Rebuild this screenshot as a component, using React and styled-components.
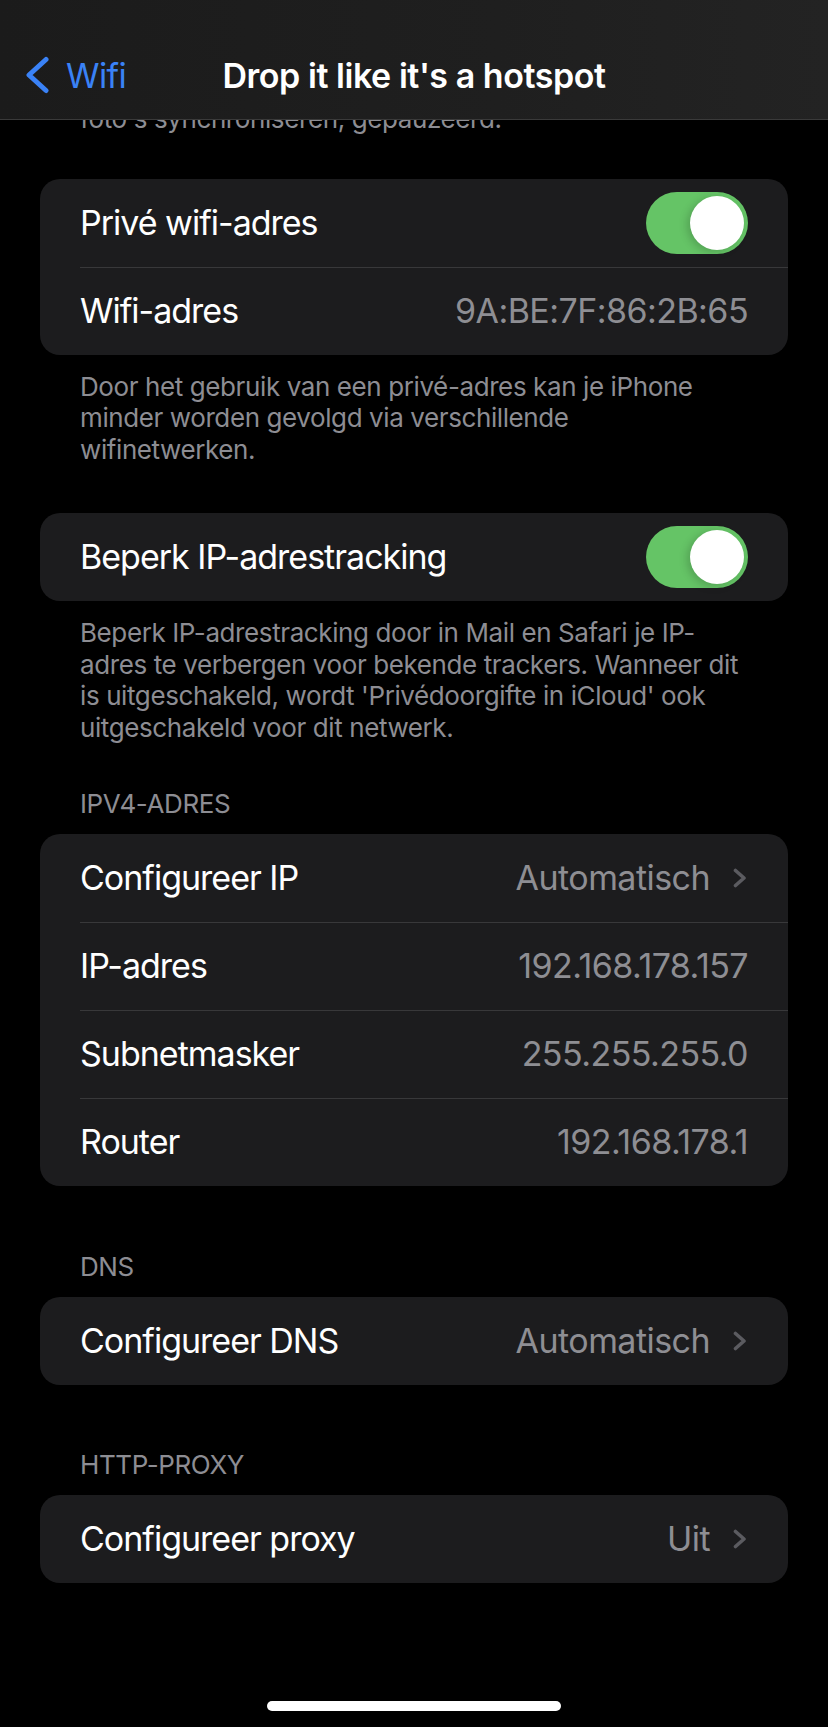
import React from 'react'
import styled, { createGlobalStyle } from 'styled-components'

const GlobalStyle = createGlobalStyle`
  html, body {
    margin: 0;
    padding: 0;
    background: #000;
  }
  body {
    font-family: Inter, "Noto Sans", "DejaVu Sans", sans-serif;
    -webkit-font-smoothing: antialiased;
  }
`

const Screen = styled.div`
  position: relative;
  width: 828px;
  min-height: 1727px;
  background: #000;
  overflow: hidden;
`

const NavBar = styled.header`
  position: absolute;
  top: 0;
  left: 0;
  right: 0;
  z-index: 2;
  height: 88px;
  padding-top: 31px;
  display: grid;
  grid-template-columns: 1fr auto 1fr;
  align-items: center;
  background: linear-gradient(90deg, #1b1b1b 0%, #1f1f1f 60%, #232323 100%);
  border-bottom: 1px solid #3a3a3a;
`

const BackButton = styled.div`
  display: flex;
  align-items: center;
  gap: 16px;
  padding-left: 24px;
  color: #3a82f6;
  font-size: 34px;
  line-height: 41px;
  letter-spacing: -0.6px;
  justify-self: start;
`

const Title = styled.h1`
  margin: 0;
  color: #fff;
  font-size: 34px;
  line-height: 41px;
  font-weight: 600;
  letter-spacing: -0.45px;
`

const Content = styled.main`
  padding: 103px 40px 140px;
`

const Group = styled.section`
  margin-top: ${p => p.$top}px;
`

const Header = styled.div`
  padding: 0 40px;
  margin-bottom: 14px;
  color: #8d8d93;
  font-size: 26px;
  line-height: 32px;
  text-transform: uppercase;
  letter-spacing: -0.4px;
`

const Card = styled.div`
  background: #1c1c1e;
  border-radius: 20px;
  overflow: hidden;
`

const Row = styled.div`
  position: relative;
  height: 88px;
  display: flex;
  align-items: center;
  justify-content: space-between;
  padding: 0 40px;

  & + &::before {
    content: '';
    position: absolute;
    top: 0;
    left: 40px;
    right: 0;
    height: 1px;
    background: #38383a;
  }
`

const Label = styled.span`
  color: #fff;
  font-size: 34px;
  line-height: 41px;
  letter-spacing: -1px;
  white-space: nowrap;
`

const Value = styled.span`
  display: flex;
  align-items: center;
  gap: 22px;
  color: #8e8e93;
  font-size: 34px;
  line-height: 41px;
  letter-spacing: -0.55px;
  white-space: nowrap;
`

const Footer = styled.p`
  margin: 0;
  padding: ${p => (p.$flush ? 0 : 16)}px 40px 0;
  color: #8d8d93;
  font-size: 26px;
  line-height: 31.7px;
  letter-spacing: -0.4px;
  white-space: pre;
`

const Switch = styled.div`
  position: relative;
  width: 102px;
  height: 62px;
  border-radius: 31px;
  background: ${p => (p.$on ? '#65c466' : '#39393d')};

  &::after {
    content: '';
    position: absolute;
    top: 4px;
    ${p => (p.$on ? 'right: 4px;' : 'left: 4px;')}
    width: 54px;
    height: 54px;
    border-radius: 50%;
    background: #fff;
    box-shadow: -3px 2px 8px rgba(0, 0, 0, 0.18);
  }
`

const HomeIndicator = styled.div`
  position: absolute;
  left: 50%;
  bottom: 16px;
  width: 294px;
  height: 10px;
  margin-left: -147px;
  border-radius: 5px;
  background: #fff;
`

function BackChevron() {
  return (
    <svg width="26" height="38" viewBox="0 0 26 38" fill="none">
      <path d="M22 3.5 L5 19 L22 34.5" stroke="#3a82f6" strokeWidth="5" strokeLinecap="round" strokeLinejoin="round" />
    </svg>
  )
}

function Disclosure() {
  return (
    <svg width="16" height="20" viewBox="0 0 16 20" fill="none">
      <path d="M3.5 2.5 L12 10 L3.5 17.5" stroke="#5b5b60" strokeWidth="3.6" strokeLinecap="round" strokeLinejoin="round" />
    </svg>
  )
}

function InfoRow({ label, value, chevron }) {
  return (
    <Row>
      <Label>{label}</Label>
      <Value>
        {value}
        {chevron && <Disclosure />}
      </Value>
    </Row>
  )
}

function ToggleRow({ label, on }) {
  return (
    <Row>
      <Label>{label}</Label>
      <Switch $on={on} />
    </Row>
  )
}

export default function App() {
  return (
    <>
      <GlobalStyle />
      <Screen>
        <NavBar>
          <BackButton>
            <BackChevron />
            <span>Wifi</span>
          </BackButton>
          <Title>Drop it like it's a hotspot</Title>
          <div />
        </NavBar>

        <Content>
          <Footer $flush>{"foto's synchroniseren, gepauzeerd."}</Footer>

          <Group $top={44}>
            <Card>
              <ToggleRow label="Privé wifi-adres" on />
              <InfoRow label="Wifi-adres" value="9A:BE:7F:86:2B:65" />
            </Card>
            <Footer>
              {"Door het gebruik van een privé-adres kan je iPhone\nminder worden gevolgd via verschillende\nwifinetwerken."}
            </Footer>
          </Group>

          <Group $top={47}>
            <Card>
              <ToggleRow label="Beperk IP-adrestracking" on />
            </Card>
            <Footer>
              {"Beperk IP-adrestracking door in Mail en Safari je IP-\nadres te verbergen voor bekende trackers. Wanneer dit\nis uitgeschakeld, wordt 'Privédoorgifte in iCloud' ook\nuitgeschakeld voor dit netwerk."}
            </Footer>
          </Group>

          <Group $top={44}>
            <Header>IPv4-adres</Header>
            <Card>
              <InfoRow label="Configureer IP" value="Automatisch" chevron />
              <InfoRow label="IP-adres" value="192.168.178.157" />
              <InfoRow label="Subnetmasker" value="255.255.255.0" />
              <InfoRow label="Router" value="192.168.178.1" />
            </Card>
          </Group>

          <Group $top={65}>
            <Header>DNS</Header>
            <Card>
              <InfoRow label="Configureer DNS" value="Automatisch" chevron />
            </Card>
          </Group>

          <Group $top={64}>
            <Header>HTTP-proxy</Header>
            <Card>
              <InfoRow label="Configureer proxy" value="Uit" chevron />
            </Card>
          </Group>
        </Content>

        <HomeIndicator />
      </Screen>
    </>
  )
}
